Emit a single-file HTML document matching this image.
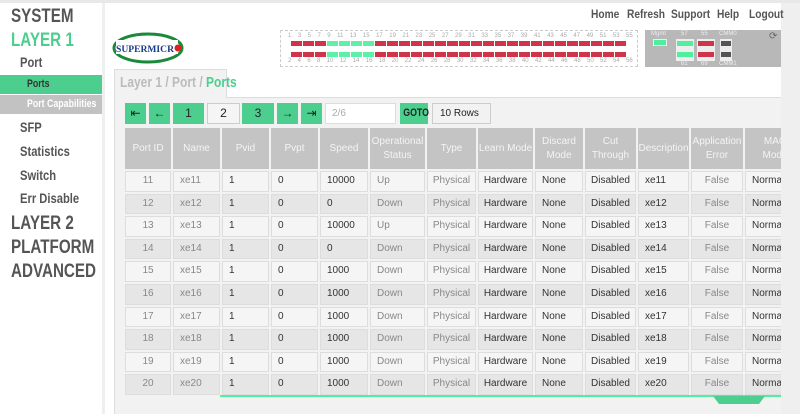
<!DOCTYPE html>
<html><head><meta charset="utf-8"><style>
*{margin:0;padding:0;box-sizing:border-box}
body{width:800px;height:414px;overflow:hidden;background:#efefef;font-family:"Liberation Sans",sans-serif;position:relative}
.abs{position:absolute;white-space:nowrap}
.nar{font-family:"Liberation Sans Narrow","Liberation Sans",sans-serif;font-weight:bold}
#side{left:0;top:3px;width:102px;height:411px;background:#fff}
.s1{position:absolute;left:11px;font-size:19px;color:#555;transform:scaleX(.8);transform-origin:left;white-space:nowrap}
.s2{position:absolute;left:20px;font-size:14px;color:#555;transform:scaleX(.8);transform-origin:left;white-space:nowrap}
#main{left:105px;top:3px;width:676px;height:411px;background:#fff}
.nav{position:absolute;top:7px;font-size:12px;color:#555;transform:scaleX(.85);transform-origin:left;white-space:nowrap}
.btn{position:absolute;top:103px;height:21px;background:#4ccf8e;color:#222;font-size:12px;text-align:center;line-height:21px}
#tbl{position:absolute;left:125px;top:128px;display:grid;grid-template-columns:46px 47px 47px 47px 48px 55px 49px 55px 48px 51px 51px 52px 60px;grid-template-rows:41px;grid-auto-rows:20.6px;gap:2px;font-size:10px}
#tbl>div{display:contents}
#tbl .h>span{background:#c4c4c4;color:#f4f4f4;display:flex;align-items:center;justify-content:center;text-align:center;line-height:14px}
#tbl .r>span{border:1px solid #ddd;padding-left:6px;color:#333;white-space:nowrap;overflow:hidden;line-height:18.6px}
#tbl .o>span{background:#f5f5f5}#tbl .e>span{background:#e6e6e6}
#tbl .r>span:nth-child(1),#tbl .r>span:nth-child(7),#tbl .r>span:nth-child(8),#tbl .r>span:nth-child(10),#tbl .r>span:nth-child(12){text-align:center;padding:0}
#tbl .r>span:nth-child(1),#tbl .r>span:nth-child(2),#tbl .r>span:nth-child(6),#tbl .r>span:nth-child(7),#tbl .r>span:nth-child(12){color:#888}
</style></head><body>
<div class="abs" style="left:0;top:0;width:800px;height:3px;background:#e8e8e8"></div>
<div id="side" class="abs nar">
<div class="s1" style="top:3px">SYSTEM</div>
<div class="s1" style="top:27px;color:#4ccf8e">LAYER 1</div>
<div class="s2" style="top:51px">Port</div>
<div class="abs" style="left:0;top:72px;width:102px;height:19px;background:#4ccf8e"></div>
<div class="abs" style="left:27px;top:75px;font-size:11px;color:#333;transform:scaleX(.8);transform-origin:left">Ports</div>
<div class="abs" style="left:0;top:92px;width:102px;height:19px;background:#c2c2c2"></div>
<div class="abs" style="left:27px;top:95px;font-size:11px;color:#fff;transform:scaleX(.8);transform-origin:left">Port Capabilities</div>
<div class="s2" style="top:116px">SFP</div>
<div class="s2" style="top:140px">Statistics</div>
<div class="s2" style="top:164px">Switch</div>
<div class="s2" style="top:187px">Err Disable</div>
<div class="s1" style="top:210px">LAYER 2</div>
<div class="s1" style="top:234px">PLATFORM</div>
<div class="s1" style="top:258px">ADVANCED</div>
</div>
<div id="main" class="abs"></div>
<div class="nar">
<div class="nav" style="left:591px">Home</div>
<div class="nav" style="left:627px">Refresh</div>
<div class="nav" style="left:671px">Support</div>
<div class="nav" style="left:717px">Help</div>
<div class="nav" style="left:749px">Logout</div>
</div>
<svg class="abs" style="left:112px;top:30px" width="75" height="35"><ellipse cx="36" cy="18" rx="34" ry="14" fill="none" stroke="#1a8a3a" stroke-width="3"/><rect x="4" y="10" width="62" height="14" fill="#fff"/><text x="4" y="22" font-family="Liberation Serif" font-size="9.5" font-weight="bold" fill="#1a3a8a" textLength="58" lengthAdjust="spacingAndGlyphs">SUPERMICR</text><circle cx="66" cy="18" r="3.5" fill="#d22"/></svg>
<div class="abs" style="left:280px;top:30px;width:358px;height:37px;border:1px dashed #ccc"></div>
<div class="abs" style="left:645px;top:30px;width:136px;height:37px;background:#b8b8b8"></div>
<div class="abs" style="left:651px;top:31px;font-size:6px;color:#eee">Mgmt</div>
<div class="abs" style="left:653px;top:39px;width:14px;height:7px;background:#4ef0a0;border:1px solid #eee"></div>
<div class="abs" style="left:676px;top:39px;width:18px;height:22px;background:#eee"></div>
<div class="abs" style="left:677px;top:41px;width:16px;height:5px;background:#4ef0a0"></div>
<div class="abs" style="left:677px;top:52px;width:16px;height:5px;background:#4ef0a0"></div>
<div class="abs" style="left:697px;top:39px;width:18px;height:22px;background:#eee"></div>
<div class="abs" style="left:698px;top:41px;width:16px;height:5px;background:#d0344a"></div>
<div class="abs" style="left:698px;top:52px;width:16px;height:5px;background:#d0344a"></div>
<div class="abs" style="left:720px;top:39px;width:12px;height:22px;background:#eee"></div>
<div class="abs" style="left:721px;top:41px;width:10px;height:5px;background:#555"></div>
<div class="abs" style="left:721px;top:52px;width:10px;height:5px;background:#555"></div>
<div class="abs" style="left:681px;top:31px;font-size:6px;color:#eee">57</div>
<div class="abs" style="left:701px;top:31px;font-size:6px;color:#eee">55</div>
<div class="abs" style="left:719px;top:31px;font-size:6px;color:#eee">CMM0</div>
<div class="abs" style="left:681px;top:61px;font-size:6px;color:#eee">61</div>
<div class="abs" style="left:701px;top:61px;font-size:6px;color:#eee">69</div>
<div class="abs" style="left:719px;top:61px;font-size:6px;color:#eee">CMM1</div>
<div class="abs" style="left:769px;top:31px;font-size:10px;color:#666">⟳</div>
<div class="abs" style="left:114px;top:97px;width:667px;height:317px;background:#f2f2f2;border-left:1px solid #ddd;border-top:1px solid #ddd"></div>
<div class="abs" style="left:114px;top:69px;width:113px;height:29px;background:#f2f2f2;border:1px solid #ddd;border-bottom:none"></div>
<div class="abs nar" style="left:120px;top:74px;font-size:15px;color:#bbb;transform:scaleX(.8);transform-origin:left">Layer 1 / Port / <span style="color:#4ccf8e">Ports</span></div>
<div class="btn" style="left:125px;width:21px">⇤</div>
<div class="btn" style="left:149px;width:21px">←</div>
<div class="btn" style="left:173px;width:31px">1</div>
<div class="btn" style="left:207px;width:33px;background:#f5f5f5;border:1px solid #ccc;line-height:19px">2</div>
<div class="btn" style="left:242px;width:32px">3</div>
<div class="btn" style="left:277px;width:21px">→</div>
<div class="btn" style="left:301px;width:21px">⇥</div>
<div class="btn" style="left:325px;width:71px;background:#fff;border:1px solid #ddd;color:#aaa;text-align:left;padding-left:6px;font-size:10px;line-height:19px">2/6</div>
<div class="btn nar" style="left:400px;width:28px;font-size:11px"><span style="display:inline-block;transform:scaleX(.8)">GOTO</span></div>
<div class="btn" style="left:432px;width:59px;background:#f2f2f2;border:1px solid #ccc;text-align:left;padding-left:7px;font-size:10px;line-height:19px">10 Rows</div>
<div class="abs" style="left:0;top:0;width:781px;height:414px;overflow:hidden">
<div id="tbl">
<div class="h"><span>Port ID</span><span>Name</span><span>Pvid</span><span>Pvpt</span><span>Speed</span><span>Operational<br>Status</span><span>Type</span><span>Learn Mode</span><span>Discard<br>Mode</span><span>Cut<br>Through</span><span>Description</span><span>Application<br>Error</span><span>MAC<br>Mode</span></div>
<div class="r o"><span>11</span><span>xe11</span><span>1</span><span>0</span><span>10000</span><span>Up</span><span>Physical</span><span>Hardware</span><span>None</span><span>Disabled</span><span>xe11</span><span>False</span><span>Normal</span></div>
<div class="r e"><span>12</span><span>xe12</span><span>1</span><span>0</span><span>0</span><span>Down</span><span>Physical</span><span>Hardware</span><span>None</span><span>Disabled</span><span>xe12</span><span>False</span><span>Normal</span></div>
<div class="r o"><span>13</span><span>xe13</span><span>1</span><span>0</span><span>10000</span><span>Up</span><span>Physical</span><span>Hardware</span><span>None</span><span>Disabled</span><span>xe13</span><span>False</span><span>Normal</span></div>
<div class="r e"><span>14</span><span>xe14</span><span>1</span><span>0</span><span>0</span><span>Down</span><span>Physical</span><span>Hardware</span><span>None</span><span>Disabled</span><span>xe14</span><span>False</span><span>Normal</span></div>
<div class="r o"><span>15</span><span>xe15</span><span>1</span><span>0</span><span>1000</span><span>Down</span><span>Physical</span><span>Hardware</span><span>None</span><span>Disabled</span><span>xe15</span><span>False</span><span>Normal</span></div>
<div class="r e"><span>16</span><span>xe16</span><span>1</span><span>0</span><span>1000</span><span>Down</span><span>Physical</span><span>Hardware</span><span>None</span><span>Disabled</span><span>xe16</span><span>False</span><span>Normal</span></div>
<div class="r o"><span>17</span><span>xe17</span><span>1</span><span>0</span><span>1000</span><span>Down</span><span>Physical</span><span>Hardware</span><span>None</span><span>Disabled</span><span>xe17</span><span>False</span><span>Normal</span></div>
<div class="r e"><span>18</span><span>xe18</span><span>1</span><span>0</span><span>1000</span><span>Down</span><span>Physical</span><span>Hardware</span><span>None</span><span>Disabled</span><span>xe18</span><span>False</span><span>Normal</span></div>
<div class="r o"><span>19</span><span>xe19</span><span>1</span><span>0</span><span>1000</span><span>Down</span><span>Physical</span><span>Hardware</span><span>None</span><span>Disabled</span><span>xe19</span><span>False</span><span>Normal</span></div>
<div class="r e"><span>20</span><span>xe20</span><span>1</span><span>0</span><span>1000</span><span>Down</span><span>Physical</span><span>Hardware</span><span>None</span><span>Disabled</span><span>xe20</span><span>False</span><span>Normal</span></div>
</div></div>
<div class="abs" style="left:220px;top:395px;width:561px;height:2px;background:#4ef0a0"></div>
<div class="abs" style="left:713px;top:396px;width:52px;height:0;border-top:8px solid #4ccf8e;border-left:6px solid transparent;border-right:6px solid transparent"></div>
<div class="abs" style="left:288px;top:33px;width:345px;font-size:6px;color:#aaa;display:flex;justify-content:space-between">
<span>1</span><span>3</span><span>5</span><span>7</span><span>9</span><span>11</span><span>13</span><span>15</span><span>17</span><span>19</span><span>21</span><span>23</span><span>25</span><span>27</span><span>29</span><span>31</span><span>33</span><span>35</span><span>37</span><span>39</span><span>41</span><span>43</span><span>45</span><span>47</span><span>49</span><span>51</span><span>53</span><span>55</span></div>
<div class="abs" style="left:288px;top:58px;width:345px;font-size:6px;color:#aaa;display:flex;justify-content:space-between">
<span>2</span><span>4</span><span>6</span><span>8</span><span>10</span><span>12</span><span>14</span><span>16</span><span>18</span><span>20</span><span>22</span><span>24</span><span>26</span><span>28</span><span>30</span><span>32</span><span>34</span><span>36</span><span>38</span><span>40</span><span>42</span><span>44</span><span>46</span><span>48</span><span>50</span><span>52</span><span>54</span><span>56</span></div>
<div class="abs" style="left:291px;top:41px;width:336px;height:5px;background:repeating-linear-gradient(90deg,#d0344a 0 11px,transparent 11px 12px)"></div>
<div class="abs" style="left:291px;top:52px;width:336px;height:5px;background:repeating-linear-gradient(90deg,#d0344a 0 11px,transparent 11px 12px)"></div>
<div class="abs" style="left:327px;top:41px;width:48px;height:5px;background:repeating-linear-gradient(90deg,#5ef0a8 0 11px,#fff 11px 12px)"></div>
<div class="abs" style="left:327px;top:52px;width:48px;height:5px;background:repeating-linear-gradient(90deg,#5ef0a8 0 11px,#fff 11px 12px)"></div>
</body></html>
